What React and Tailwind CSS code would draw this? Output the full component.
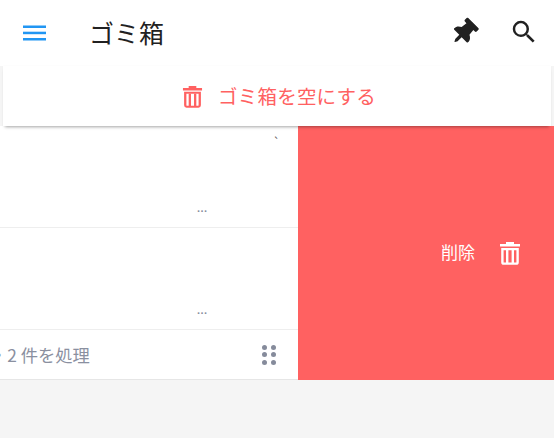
import React from "react";
import { FaThumbtack } from "react-icons/fa";

function Trash({ className }) {
  return (
    <svg viewBox="0 0 22 24" className={className} fill="currentColor">
      <path d="M7 1h8v2h6v2.6H1V3h6z" />
      <path fillRule="evenodd" d="M2.2 7h17.6v14.2a2.6 2.6 0 0 1-2.6 2.6H4.8a2.6 2.6 0 0 1-2.6-2.6zM4.6 9.2v12a.4.4 0 0 0 .4.4h12a.4.4 0 0 0 .4-.4v-12z" />
      <rect x="7" y="9" width="2.4" height="13" />
      <rect x="12.6" y="9" width="2.4" height="13" />
    </svg>
  );
}

export default function App() {
  return (
    <div className="w-[554px] h-[438px] overflow-hidden bg-[#f5f5f5] flex flex-col font-['Noto_Sans_CJK_JP',sans-serif]">
      <header className="h-[66px] bg-white flex items-center shrink-0">
        <svg viewBox="0 0 23 16" className="ml-[23px] w-[23px] h-[16px] text-[#2196f3]" fill="currentColor">
          <rect y="0.5" width="23" height="2.5" />
          <rect y="6.7" width="23" height="2.5" />
          <rect y="13" width="23" height="2.5" />
        </svg>
        <h1 className="ml-[43px] -mt-[2px] text-[25px] leading-none font-normal text-[#212121]">ゴミ箱</h1>
        <FaThumbtack className="ml-auto -mt-[1px] -translate-x-[1px] w-[20px] h-[27px] text-[#212121] rotate-45" />
        <svg viewBox="0 0 24 24" className="ml-[34px] mr-[15px] -mt-[2px] w-[30px] h-[30px] text-[#212121]" fill="currentColor">
          <path d="M15.5 14h-.79l-.28-.27A6.47 6.47 0 0 0 16 9.5 6.5 6.5 0 1 0 9.5 16c1.61 0 3.09-.59 4.23-1.57l.27.28v.79l5 4.99L20.49 19l-4.99-5zm-6 0C7.01 14 5 11.99 5 9.5S7.01 5 9.5 5 14 7.01 14 9.5 11.99 14 9.5 14z" />
        </svg>
      </header>
      <div className="relative z-10 mx-[3px] pl-[4px] h-[60px] shrink-0 bg-white flex items-center justify-center gap-[15px] text-[#ff6161] shadow-[0_3px_3px_-2px_rgba(0,0,0,0.35),0_0_2px_rgba(0,0,0,0.03)]">
        <Trash className="w-[21px] h-[23px]" />
        <span className="text-[19.5px] tracking-[0.2px] leading-none">ゴミ箱を空にする</span>
      </div>
      <div className="flex h-[254px] shrink-0">
        <div className="w-[298px] bg-white flex flex-col text-[#8a90a0]">
          <div className="relative h-[102px] border-b border-[#eeeeee] shrink-0">
            <span className="absolute left-[273px] top-[10px] text-[12px] leading-none text-[#666]">`</span>
            <span className="absolute left-[197px] top-[77px] text-[11px] leading-none font-bold tracking-[0.5px] font-['Liberation_Sans',sans-serif]">...</span>
          </div>
          <div className="relative h-[102px] border-b border-[#eeeeee] shrink-0">
            <span className="absolute left-[197px] top-[77px] text-[11px] leading-none font-bold tracking-[0.5px] font-['Liberation_Sans',sans-serif]">...</span>
          </div>
          <div className="flex-1 flex items-center justify-between pr-[22px] border-b border-[#e6e6e6]">
            <span className="text-[17.3px] leading-none whitespace-nowrap -ml-[10px]">・2 件を処理</span>
            <div className="grid grid-cols-2 gap-x-[4px] gap-y-[2.5px]">
              {[0, 1, 2, 3, 4, 5].map((i) => (
                <span key={i} className="block w-[5px] h-[5px] rounded-full bg-[#858b9b]" />
              ))}
            </div>
          </div>
        </div>
        <div className="flex-1 bg-[#ff6161] flex items-center justify-end pr-[33px] text-white">
          <span className="text-[17px] leading-none mr-[24px] -mt-[3px]">削除</span>
          <Trash className="w-[22px] h-[24px] -mt-[1px]" />
        </div>
      </div>
    </div>
  );
}
